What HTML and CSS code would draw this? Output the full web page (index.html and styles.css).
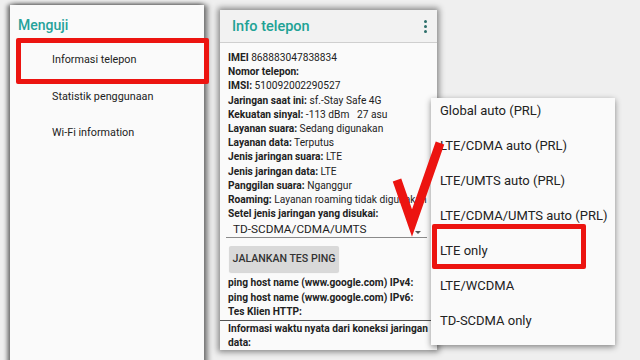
FILE: index.html
```html
<!DOCTYPE html>
<html>
<head>
<meta charset="utf-8">
<link rel="stylesheet" href="styles.css">
</head>
<body>
<div class="stage">
  <section class="panel-left">
    <h2 class="left-title">Menguji</h2>
    <ul class="left-list">
      <li>Informasi telepon</li>
      <li>Statistik penggunaan</li>
      <li>Wi-Fi information</li>
    </ul>
  </section>

  <section class="panel-mid">
    <header class="mid-head">
      <span class="mid-title">Info telepon</span>
      <span class="dots"><i></i><i></i><i></i></span>
    </header>
    <div class="mid-body">
      <p><b>IMEI</b> 868883047838834</p>
      <p><b>Nomor telepon:</b></p>
      <p><b>IMSI:</b> 510092002290527</p>
      <p><b>Jaringan saat ini:</b> sf.-Stay Safe 4G</p>
      <p><b>Kekuatan sinyal:</b> -113 dBm&nbsp;&nbsp; 27 asu</p>
      <p><b>Layanan suara:</b> Sedang digunakan</p>
      <p><b>Layanan data:</b> Terputus</p>
      <p><b>Jenis jaringan suara:</b> LTE</p>
      <p><b>Jenis jaringan data:</b> LTE</p>
      <p><b>Panggilan suara:</b> Nganggur</p>
      <p class="nowrap"><b>Roaming:</b> Layanan roaming tidak digunakan</p>
      <p><b>Setel jenis jaringan yang disukai:</b></p>
      <div class="spinner"><span>TD-SCDMA/CDMA/UMTS</span><i class="caret"></i></div>
      <div class="btn">JALANKAN TES PING</div>
      <p><b>ping host name (www.google.com) IPv4:</b></p>
      <p><b>ping host name (www.google.com) IPv6:</b></p>
      <p><b>Tes Klien HTTP:</b></p>
      <div class="rule"></div>
      <p><b>Informasi waktu nyata dari koneksi jaringan data:</b></p>
      <p><b>Pesan menunggu:</b> false</p>
    </div>
  </section>

  <ul class="menu">
    <li>Global auto (PRL)</li>
    <li>LTE/CDMA auto (PRL)</li>
    <li>LTE/UMTS auto (PRL)</li>
    <li>LTE/CDMA/UMTS auto (PRL)</li>
    <li>LTE only</li>
    <li>LTE/WCDMA</li>
    <li>TD-SCDMA only</li>
  </ul>

  <div class="mark mark-left"></div>
  <div class="mark mark-right"></div>
  <svg class="check" width="80" height="110" viewBox="0 0 80 110">
    <path d="M7 42 L22 85 L50 5" fill="none" stroke="#ec1410" stroke-width="9" stroke-linejoin="miter" stroke-linecap="butt"/>
  </svg>
</div>
</body>
</html>
```

FILE: styles.css
```css
* { box-sizing: border-box; margin: 0; padding: 0; }
html, body { width: 640px; height: 360px; overflow: hidden; }
body {
  background: #e9e9e9;
  font-family: Roboto, "Liberation Sans", sans-serif;
  color: #1e1e1e;
}
.stage {
  position: relative;
  width: 640px;
  height: 360px;
  display: flex;
  align-items: flex-start;
  background: #efefef;
}
.panel-left {
  margin: 5px 0 0 10px;
  width: 194px;
  height: 370px;
  background: #fafafa;
  box-shadow: -3px 0 4px rgba(0,0,0,0.45), 4px 0 5px rgba(0,0,0,0.45), 0 -2px 4px rgba(0,0,0,0.2);
  padding: 12px 0 0 8px;
}
.left-title {
  font-size: 14px;
  font-weight: 500;
  color: #26a29a;
  height: 25px;
}
.left-list { list-style: none; }
.left-list li {
  font-size: 10.8px;
  padding-left: 34px;
  height: 36.5px;
  line-height: 36.5px;
  color: #222;
}
.panel-mid {
  margin: 10px 0 0 16px;
  width: 217px;
  height: 340px;
  background: #fafafa;
  box-shadow: 0 0 6px 2px rgba(0,0,0,0.45);
  overflow: hidden;
  position: relative;
}
.mid-head {
  height: 33px;
  background: #f2f2f2;
  border-bottom: 1px solid #cfcfcf;
  display: flex;
  align-items: center;
  justify-content: space-between;
  padding: 0 10px 0 12px;
}
.mid-title {
  font-size: 14.5px;
  font-weight: 500;
  color: #21a295;
}
.dots { display: flex; flex-direction: column; gap: 2px; }
.dots i { width: 3px; height: 3px; background: #2d6f6a; border-radius: 50%; display: block; }
.mid-body {
  padding: 8px 2px 0 8px;
  font-size: 10.2px;
  line-height: 14.2px;
}
.mid-body p { color: #222; }
.mid-body b { font-weight: 700; }
.nowrap { white-space: nowrap; }
.spinner {
  height: 17px;
  margin: 0 8px 0 -2px;
  border-bottom: 1px solid #8a8a8a;
  display: flex;
  align-items: center;
  justify-content: space-between;
  padding: 0 6px 0 7px;
  font-size: 11.8px;
}
.caret {
  width: 0; height: 0;
  border-left: 3px solid transparent;
  border-right: 3px solid transparent;
  border-top: 3px solid #555;
  margin-top: 6px;
}
.btn {
  width: 110px;
  height: 26px;
  margin: 8px 0 4px 1px;
  background: #d9d9d9;
  border-radius: 2px;
  font-size: 10.6px;
  font-weight: 500;
  color: #333;
  display: flex;
  align-items: center;
  justify-content: center;
  box-shadow: 0 1px 1px rgba(0,0,0,0.15);
}
.rule { height: 1px; background: #555; margin: 1px -2px 1px -8px; }
.menu {
  position: absolute;
  left: 431px;
  top: 98px;
  width: 184px;
  height: 247px;
  background: #fafafa;
  list-style: none;
  box-shadow: 0 2px 6px rgba(0,0,0,0.45);
  padding-top: 0;
}
.menu li {
  height: 35px;
  line-height: 25px;
  padding-left: 9px;
  font-size: 13px;
  color: #222;
}
.mark {
  position: absolute;
  border: 5px solid #ec1410;
  border-radius: 2px;
}
.mark-left { left: 16px; top: 38px; width: 193px; height: 46px; }
.mark-right { left: 432px; top: 224px; width: 154px; height: 45px; }
.check {
  position: absolute;
  left: 390px;
  top: 138px;
}
```
